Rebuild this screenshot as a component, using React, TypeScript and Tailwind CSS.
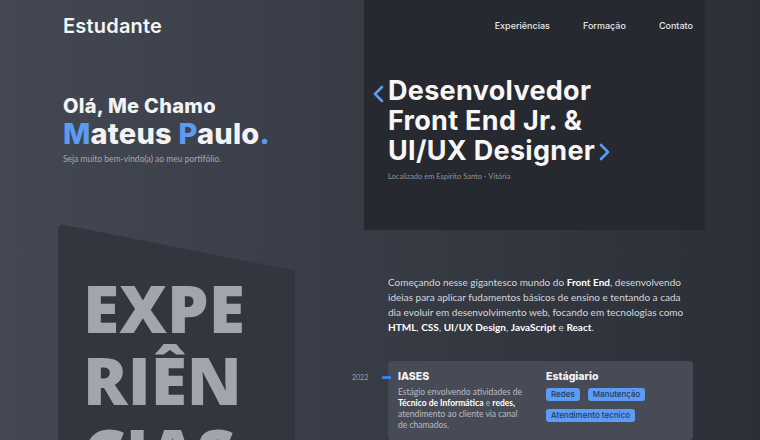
import React from "react";

const head = { fontFamily: "Inter, 'Liberation Sans', sans-serif" };
const body = { fontFamily: "Lato, 'Open Sans', sans-serif" };

function Chevron({ dir, className }: { dir: "left" | "right"; className?: string }) {
  return (
    <svg viewBox="0 0 12 18" className={className} fill="none" stroke="#5b9bf0" strokeWidth="2.6" strokeLinecap="round" strokeLinejoin="round">
      {dir === "left" ? <path d="M10 2 L3 9 L10 16" /> : <path d="M2 2 L9 9 L2 16" />}
    </svg>
  );
}

export default function App() {
  const tags = ["Redes", "Manutenção", "Atendimento tecnico"];

  return (
    <div className="w-[760px] h-[440px] overflow-hidden flex bg-gradient-to-r from-[#434853] to-[#2b2f37] text-white">
      {/* Left column */}
      <div className="w-[364px] shrink-0 pl-[58px] flex flex-col">
        <div className="pl-[5px]">
          <div style={head} className="pt-[13px] text-[20px] leading-[26px] font-semibold tracking-[0.2px] text-[#f5f5f5]">
            Estudante
          </div>

          <div style={head} className="mt-[55px] text-[20px] leading-[24px] font-extrabold tracking-[0.3px] text-[#f3f3f3]">
            Olá, Me Chamo
          </div>
          <div style={head} className="text-[29px] leading-[32px] font-extrabold tracking-[0.2px] text-[#f3f3f3]">
            <span className="text-[#5b9bf0]">M</span>ateus <span className="text-[#5b9bf0]">P</span>aulo
            <span className="text-[#5b9bf0]">.</span>
          </div>
          <p style={body} className="mt-[3px] text-[8.5px] text-[#a4a8af]">
            Seja muito bem-vindo(a) ao meu portifólio.
          </p>
        </div>

        {/* Slanted card */}
        <div
          className="mt-[58px] w-[237px] h-[240px] bg-[#33363f] rounded-tl-[6px] pl-[25px] pt-[47px]"
          style={{ clipPath: "polygon(0 0, 100% 47px, 100% 100%, 0 100%)" }}
        >
          <div
            style={{ fontFamily: "'Open Sans', sans-serif" }}
            className="text-[66px] leading-[72px] font-extrabold text-[#a2a5ab]"
          >
            EXPE
            <br />
            RIÊN
            <br />
            CIAS
          </div>
        </div>
      </div>

      {/* Right column */}
      <div className="w-[341px] shrink-0 flex flex-col">
        <div className="h-[230px] bg-[#26292f] flex flex-col">
          <nav style={head} className="flex justify-end gap-[33px] pr-[12px] pt-[19px] text-[9px] font-medium text-[#e6e7ea]">
            <span>Experiências</span>
            <span>Formação</span>
            <span>Contato</span>
          </nav>

          <div className="relative ml-[24px] mt-[43px]">
            <Chevron dir="left" className="absolute left-[-16px] top-[9px] w-[12px] h-[18px]" />
            <h2 style={head} className="text-[27px] leading-[30px] font-bold tracking-[0.3px] text-[#f7f7f7]">
              Desenvolvedor
              <br />
              Front End Jr. &amp;
              <br />
              <span className="inline-flex items-center">
                UI/UX Designer
                <Chevron dir="right" className="ml-[4px] mt-[3px] w-[12px] h-[18px]" />
              </span>
            </h2>
            <p style={body} className="mt-[5px] text-[7.5px] text-[#8e929a]">
              Localizado em Espírito Santo - Vitória
            </p>
          </div>
        </div>

        <p style={body} className="ml-[24px] mt-[45px] text-[10px] leading-[15px] text-[#d6d8dc] whitespace-nowrap">
          Começando nesse gigantesco mundo do <b className="text-white">Front End</b>, desenvolvendo
          <br />
          ideias para aplicar fudamentos básicos de ensino e tentando a cada
          <br />
          dia evoluir em desenvolvimento web, focando em tecnologias como
          <br />
          <b className="text-white">HTML</b>, <b className="text-white">CSS</b>,{" "}
          <b className="text-white">UI/UX Design</b>, <b className="text-white">JavaScript</b> e{" "}
          <b className="text-white">React</b>.
        </p>

        {/* Timeline item */}
        <div className="relative ml-[24px] mt-[26px] w-[305px]">
          <span style={body} className="absolute left-[-36px] top-[11px] text-[7px] text-[#9a9ea6]">
            2022
          </span>
          <span className="absolute left-[-6px] top-[15px] w-[9px] h-[3px] bg-[#3d7fe0] z-10" />
          <div className="bg-[#474b55] rounded-[4px] flex pl-[10px] pt-[9px] pb-[9px]">
            <div className="w-[148px]">
              <div style={head} className="text-[10.5px] leading-[14px] font-extrabold text-[#f5f5f5]">
                IASES
              </div>
              <p style={body} className="mt-[3px] w-[126px] text-[8.5px] leading-[11px] text-[#b9bcc2]">
                Estágio envolvendo atividades de <b className="text-white">Técnico de Informática</b> e{" "}
                <b className="text-white">redes,</b> atendimento ao cliente via canal de chamados.
              </p>
            </div>
            <div className="flex-1">
              <div style={head} className="text-[10.5px] leading-[14px] font-extrabold text-[#f5f5f5]">
                Estágiario
              </div>
              <div className="mt-[4px] flex flex-wrap gap-x-[8px] gap-y-[8px] w-[110px]">
                {tags.map((t) => (
                  <span
                    key={t}
                    style={head}
                    className="h-[13px] px-[5px] rounded-[3px] bg-[#5d9cf6] text-[#263a5c] text-[8px] leading-[13px] font-medium"
                  >
                    {t}
                  </span>
                ))}
              </div>
            </div>
          </div>
        </div>
      </div>
    </div>
  );
}
